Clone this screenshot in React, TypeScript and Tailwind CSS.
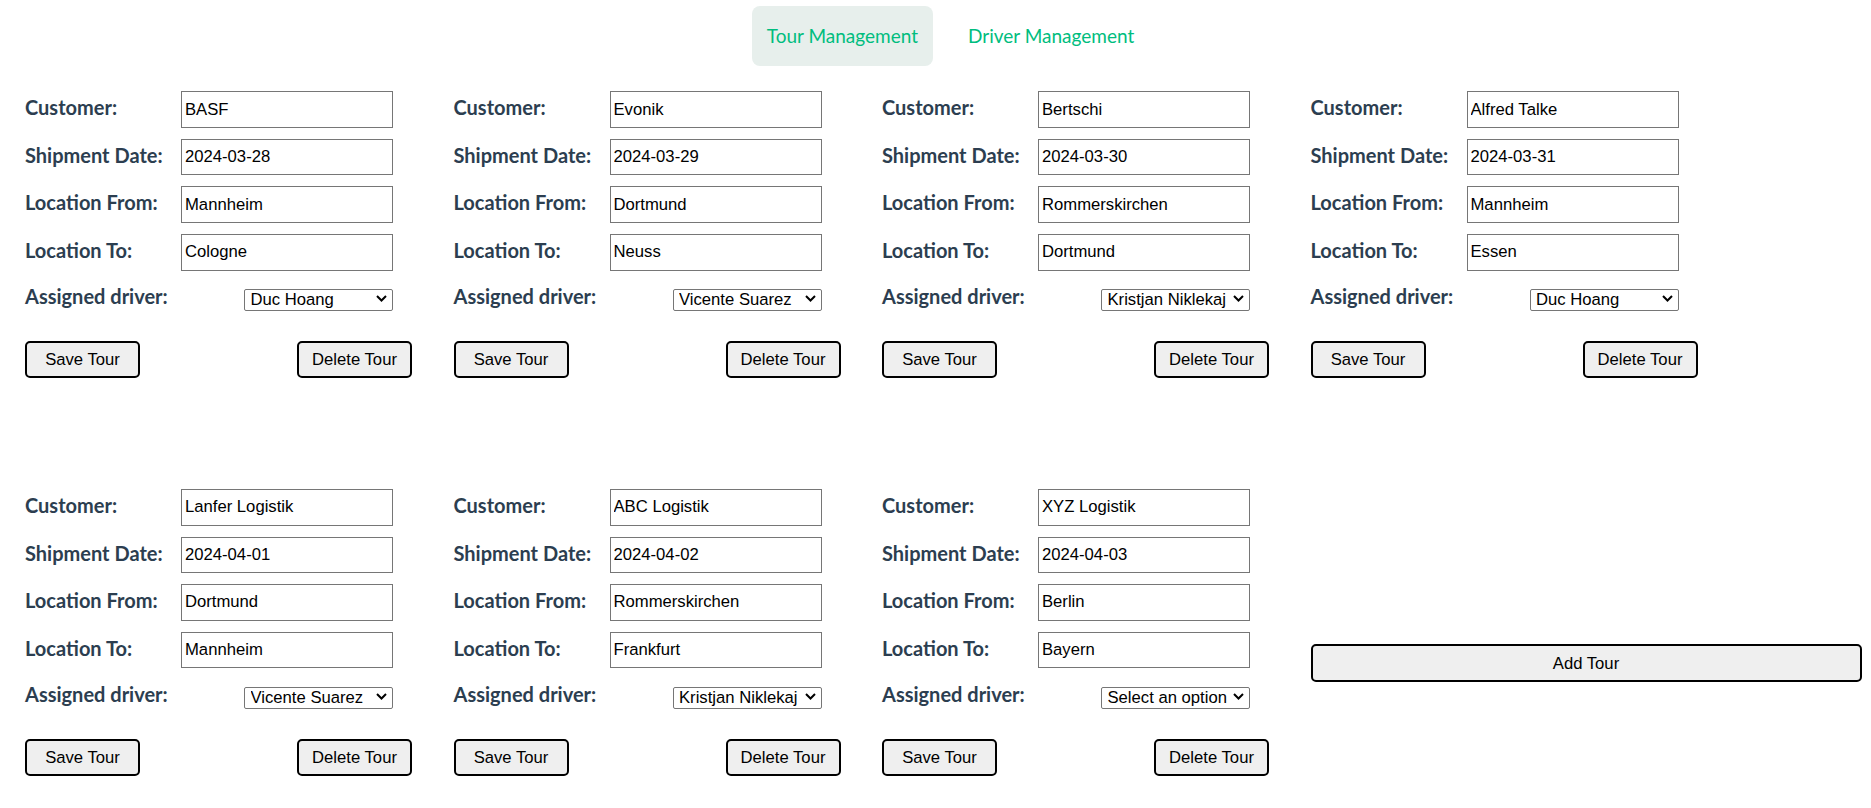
import React from "react";

type Tour = {
  customer: string;
  date: string;
  from: string;
  to: string;
  driver: string;
};

const tours: Tour[] = [
  { customer: "BASF", date: "2024-03-28", from: "Mannheim", to: "Cologne", driver: "Duc Hoang" },
  { customer: "Evonik", date: "2024-03-29", from: "Dortmund", to: "Neuss", driver: "Vicente Suarez" },
  { customer: "Bertschi", date: "2024-03-30", from: "Rommerskirchen", to: "Dortmund", driver: "Kristjan Niklekaj" },
  { customer: "Alfred Talke", date: "2024-03-31", from: "Mannheim", to: "Essen", driver: "Duc Hoang" },
  { customer: "Lanfer Logistik", date: "2024-04-01", from: "Dortmund", to: "Mannheim", driver: "Vicente Suarez" },
  { customer: "ABC Logistik", date: "2024-04-02", from: "Rommerskirchen", to: "Frankfurt", driver: "Kristjan Niklekaj" },
  { customer: "XYZ Logistik", date: "2024-04-03", from: "Berlin", to: "Bayern", driver: "" },
];

const drivers = ["Duc Hoang", "Vicente Suarez", "Kristjan Niklekaj"];

function Field({ label, value }: { label: string; value: string }) {
  return (
    <div className="flex w-[368px] h-[36.6px] justify-between items-start">
      <label className="font-bold text-[20px] leading-[24px] pt-[4px] text-[#2c3e50]">{label}</label>
      <input
        defaultValue={value}
        className="w-[212px] h-full border border-[#767676] pl-[3px] font-['Liberation_Sans',Arial,sans-serif] text-[16.67px] text-black bg-white outline-none"
      />
    </div>
  );
}

function Btn({ children }: { children: React.ReactNode }) {
  return (
    <button className="w-[115px] h-[37px] border-2 border-black rounded-[5px] bg-[#efefef] font-['Liberation_Sans',Arial,sans-serif] text-[16.67px] text-black">
      {children}
    </button>
  );
}

function Card({ t }: { t: Tour }) {
  return (
    <div className="flex flex-col w-[387px]">
      <div className="flex flex-col gap-[11px]">
        <Field label="Customer:" value={t.customer} />
        <Field label="Shipment Date:" value={t.date} />
        <Field label="Location From:" value={t.from} />
        <Field label="Location To:" value={t.to} />
      </div>
      <div className="flex w-[368px] justify-between items-start mt-[16.6px]">
        <label className="font-bold text-[20px] leading-[24px] -mt-[3px] text-[#2c3e50]">Assigned driver:</label>
        <div className="relative w-[149px] h-[22.4px]">
          <select
            defaultValue={t.driver}
            className="appearance-none w-full h-full border border-[#767676] rounded-[2px] pl-[5.5px] pr-[20px] font-['Liberation_Sans',Arial,sans-serif] text-[16.67px] leading-[20px] text-black bg-white outline-none"
          >
            <option value="">Select an option</option>
            {drivers.map((d) => (
              <option key={d} value={d}>
                {d}
              </option>
            ))}
          </select>
          <svg
            className="absolute right-[6px] top-[8px] pointer-events-none"
            width="11"
            height="7"
            viewBox="0 0 11 7"
          >
            <polyline points="1,1 5.5,5.5 10,1" fill="none" stroke="#000" strokeWidth="2" />
          </svg>
        </div>
      </div>
      <div className="flex justify-between mt-[31.3px]">
        <Btn>Save Tour</Btn>
        <Btn>Delete Tour</Btn>
      </div>
    </div>
  );
}

export default function App() {
  return (
    <div className="min-h-screen bg-white font-['Lato','Noto_Sans',sans-serif]">
      <nav className="flex justify-center pl-[32px] pt-[6px] text-[19px]">
        <a className="h-[60px] px-[15px] rounded-[8px] bg-[#e7efec] text-[#00bd7e] flex items-center">
          Tour Management
        </a>
        <a className="h-[60px] px-[17px] ml-[18px] text-[#00bd7e] flex items-center">Driver Management</a>
      </nav>
      <div className="grid grid-cols-[repeat(4,387px)] gap-x-[41.5px] gap-y-[111px] pl-[25px] mt-[25.3px]">
        {tours.map((t, i) => (
          <Card key={i} t={t} />
        ))}
        <div className="pt-[155.5px]">
          <button className="w-[551px] h-[38px] border-2 border-black rounded-[5px] bg-[#efefef] font-['Liberation_Sans',Arial,sans-serif] text-[16.67px] text-black">
            Add Tour
          </button>
        </div>
      </div>
    </div>
  );
}
